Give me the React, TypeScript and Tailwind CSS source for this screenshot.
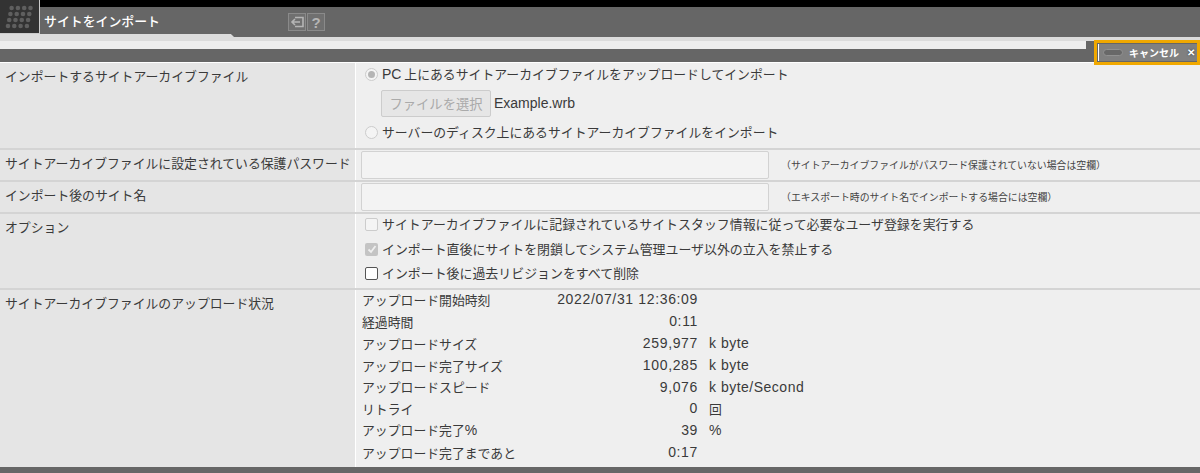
const font = { fontFamily: '"Noto Sans CJK JP","Noto Sans",sans-serif' };

function L({ children, className = "" }: { children: React.ReactNode; className?: string }) {
  return <span className={`font-['Liberation_Sans',sans-serif] text-[14px] ${className}`}>{children}</span>;
}

function Row({ label, h, children }: { label: string; h: string; children: React.ReactNode }) {
  return (
    <div className={`flex border-b-2 border-[#d4d4d4] ${h}`}>
      <div className="w-[356px] shrink-0 bg-[#e5e5e5] pl-[5px] pt-[3px] text-[12.85px] leading-5 text-[#3a3a3a] border-r border-white">{label}</div>
      <div className="flex-1 bg-[#efefef] min-w-0">{children}</div>
    </div>
  );
}

const stats: [string, string, string, string?][] = [
  ["アップロード開始時刻", "2022/07/31 12:36:09", ""],
  ["経過時間", "0:11", ""],
  ["アップロードサイズ", "259,977", "k byte"],
  ["アップロード完了サイズ", "100,285", "k byte"],
  ["アップロードスピード", "9,076", "k byte/Second"],
  ["リトライ", "0", "", "回"],
  ["アップロード完了", "39", "%"],
  ["アップロード完了まであと", "0:17", ""],
];

function Radio({ on }: { on?: boolean }) {
  return (
    <span className="w-[13px] h-[13px] rounded-full border border-[#ccc] bg-[#f4f4f4] flex items-center justify-center shrink-0">
      {on && <span className="w-[7px] h-[7px] rounded-full bg-[#b5b5b5]" />}
    </span>
  );
}

function Field({ note }: { note: string }) {
  return (
    <div className="flex items-center pl-[5px] h-full">
      <div className="w-[408px] h-[28px] bg-[#f3f3f3] border border-[#d2d2d2] rounded-[2px] shrink-0" />
      <span className="ml-[12px] text-[9.9px] text-[#444] whitespace-nowrap">{note}</span>
    </div>
  );
}

export default function App() {
  return (
    <div className="w-[1200px] h-[473px] overflow-hidden bg-[#666] relative" style={font}>
      <div className="h-[7px] bg-black" />
      <div className="h-[30px] bg-[#666] flex items-start">
        <div className="w-[233px] pl-[44px] h-[27px] flex items-center text-[12.9px] text-white font-medium">サイトをインポート</div>
        <div className="flex gap-px mt-[6px] ml-[55px]">
          <div className="w-[18px] h-[18px] border border-[#8a8a8a] bg-[#707070] flex items-center justify-center">
            <svg width="14" height="12" viewBox="0 0 14 12" fill="none" stroke="#b5b5b5" strokeWidth="1.6">
              <path d="M5 1.5H13V10.5H5" />
              <path d="M10 6H2M5 3L2 6L5 9" />
            </svg>
          </div>
          <div className="w-[18px] h-[18px] border border-[#8a8a8a] bg-[#707070] flex items-center justify-center text-[15px] font-bold text-[#b5b5b5] leading-none font-['Liberation_Sans',sans-serif]">?</div>
        </div>
      </div>
      <div className="absolute left-0 top-[34px] w-[234px] h-[3px] bg-[#dcdcdc] [clip-path:polygon(0_0,98.7%_0,100%_100%,0_100%)]" />
      <div className="absolute left-0 top-0 w-[40px] h-[34px] bg-[#333] border-r border-b border-[#ccc] flex items-center justify-center">
        <svg width="30" height="26" viewBox="0 0 30 26">
          {[0, 1, 2, 3].map((r) =>
            [0, 1, 2, 3].map((c) => (
              <circle key={`${r}-${c}`} cx={3 + c * 6.3 + (3 - r) * 1.2} cy={4 + r * 6} r="2.3" fill="#5f5f5f" />
            ))
          )}
        </svg>
      </div>
      <div className="h-[4px] bg-[#dcdcdc]" />
      <div className="h-[8px] bg-[#eeeeee] w-[1086px]" />
      <div className="absolute top-[41px] left-[1086px] w-[114px] h-[8px] bg-[#666]" />
      <div className="h-[13px] bg-[#666]" />
      <div className="absolute left-[1094px] top-[40px] w-[106px] h-[25px] border-[3px] border-[#f0a800] bg-[#666] pl-[1px] py-px">
        <div className="h-full bg-[#808080] border-l border-white flex items-center pl-[4px] pr-[2px]">
          <span className="w-[20px] h-[7px] rounded-full bg-[#686868] border border-[#919191] shrink-0" />
          <span className="text-[10px] font-bold text-white ml-[6px] whitespace-nowrap">キャンセル</span>
          <span className="ml-auto text-[10px] font-bold text-white leading-none [text-shadow:0_0_2px_#333] font-['Liberation_Sans',sans-serif]">✕</span>
        </div>
      </div>
      <div className="bg-[#efefef] border-t border-white">
        <Row label="インポートするサイトアーカイブファイル" h="h-[87px]">
          <div className="pl-[9px] text-[12.85px] text-[#3a3a3a] leading-5">
            <div className="flex items-center gap-[4px] h-[22px]"><Radio on /><span><L>PC</L> 上にあるサイトアーカイブファイルをアップロードしてインポート</span></div>
            <div className="flex items-center mt-[5px] ml-[16px] gap-[3px]">
              <div className="w-[110px] h-[27px] border border-[#ccc] rounded-[2px] bg-[#e6e6e6] flex items-center justify-center text-[13.3px] text-[#aaa]">ファイルを選択</div>
              <L className="-mt-[1px]">Example.wrb</L>
            </div>
            <div className="flex items-center gap-[4px] h-[20px] mt-[5px]"><Radio /><span>サーバーのディスク上にあるサイトアーカイブファイルをインポート</span></div>
          </div>
        </Row>
        <Row label="サイトアーカイブファイルに設定されている保護パスワード" h="h-[32px]"><Field note="（サイトアーカイブファイルがパスワード保護されていない場合は空欄）" /></Row>
        <Row label="インポート後のサイト名" h="h-[32px]"><Field note="（エキスポート時のサイト名でインポートする場合には空欄）" /></Row>
        <Row label="オプション" h="h-[76px]">
          <div className="pl-[9px] text-[12.93px] text-[#3a3a3a] flex flex-col gap-[4px]">
            <div className="flex items-center gap-[4px] h-[20px]">
              <span className="w-[13px] h-[13px] border border-[#ccc] rounded-[2px] bg-[#f4f4f4]" />
              <span>サイトアーカイブファイルに記録されているサイトスタッフ情報に従って必要なユーザ登録を実行する</span>
            </div>
            <div className="flex items-center gap-[4px] h-[20px] mt-[1px]">
              <span className="w-[13px] h-[13px] rounded-[2px] bg-[#c4c4c4] flex items-center justify-center">
                <svg width="10" height="10" viewBox="0 0 10 10" fill="none" stroke="#efefef" strokeWidth="1.8"><path d="M1.5 5.5L4 8L8.5 2" /></svg>
              </span>
              <span>インポート直後にサイトを閉鎖してシステム管理ユーザ以外の立入を禁止する</span>
            </div>
            <div className="flex items-center gap-[4px] h-[20px]">
              <span className="w-[13px] h-[13px] border border-[#555] rounded-[2px] bg-white" />
              <span>インポート後に過去リビジョンをすべて削除</span>
            </div>
          </div>
        </Row>
        <div className="flex h-[177px]">
          <div className="w-[356px] shrink-0 bg-[#e5e5e5] pl-[5px] pt-[3px] text-[12.85px] leading-5 text-[#3a3a3a] border-r border-white">サイトアーカイブファイルのアップロード状況</div>
          <div className="flex-1 pl-[6px] -mt-px text-[12.85px] text-[#3a3a3a]">
            {stats.map(([a, b, c, d]) => (
              <div key={a} className="flex items-center h-[21.8px]">
                <span className="w-[190px] whitespace-nowrap">{a}{a === "アップロード完了" && <L>%</L>}</span>
                <L className="w-[146px] text-right whitespace-nowrap tracking-[0.65px]">{b}</L>
                <span className="ml-[11px]">{c && <L className="tracking-[0.5px]">{c}</L>}{d}</span>
              </div>
            ))}
          </div>
        </div>
      </div>
      <div className="h-[7px] bg-[#666]" />
    </div>
  );
}
